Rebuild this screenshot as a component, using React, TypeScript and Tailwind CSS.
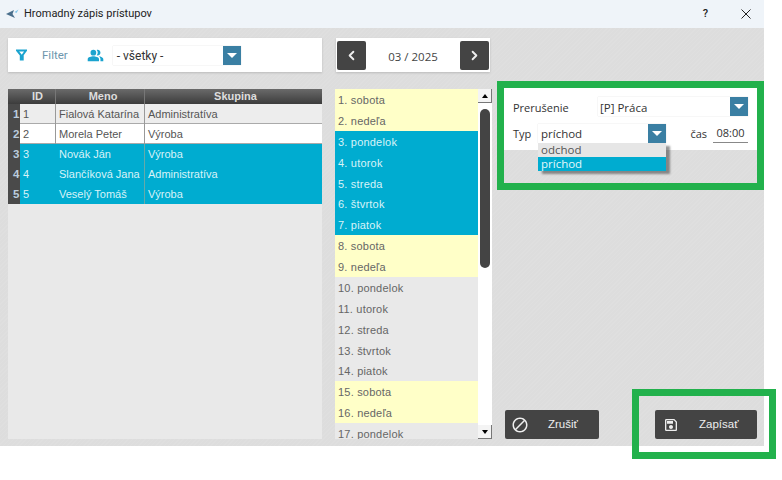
import { ChevronLeft, ChevronRight } from "lucide-react";
import { MdOutlineBlock, MdOutlineSave, MdPeopleAlt } from "react-icons/md";

const people = [
  { id: 1, name: "Fialová Katarína", group: "Administratíva", tone: "gray" },
  { id: 2, name: "Morela Peter", group: "Výroba", tone: "white" },
  { id: 3, name: "Novák Ján", group: "Výroba", tone: "blue" },
  { id: 4, name: "Slančíková Jana", group: "Administratíva", tone: "blue" },
  { id: 5, name: "Veselý Tomáš", group: "Výroba", tone: "blue" },
];

const days = [
  ["1. sobota", "y"],
  ["2. nedeľa", "y"],
  ["3. pondelok", "b"],
  ["4. utorok", "b"],
  ["5. streda", "b"],
  ["6. štvrtok", "b"],
  ["7. piatok", "b"],
  ["8. sobota", "y"],
  ["9. nedeľa", "y"],
  ["10. pondelok", "g"],
  ["11. utorok", "g"],
  ["12. streda", "g"],
  ["13. štvrtok", "g"],
  ["14. piatok", "g"],
  ["15. sobota", "y"],
  ["16. nedeľa", "y"],
  ["17. pondelok", "g"],
];

function Caret() {
  return (
    <span className="flex h-[19px] w-[18px] shrink-0 items-center justify-center bg-[#3a7fa3]">
      <span className="h-0 w-0 border-x-[5px] border-t-[5px] border-x-transparent border-t-white" />
    </span>
  );
}

function ScrollArrow({ up }: { up?: boolean }) {
  return (
    <div className="flex h-[14px] w-[14px] items-center justify-center border-r border-b border-[#777] bg-[#f4f4f4]">
      <span
        className={`h-0 w-0 border-x-[3px] border-x-transparent ${
          up ? "border-b-[4px] border-b-black" : "border-t-[4px] border-t-black"
        }`}
      />
    </div>
  );
}

export default function App() {
  return (
    <div className="relative h-[480px] w-[782px] overflow-hidden bg-white font-['Liberation_Sans',sans-serif] text-[11px] text-[#555]">
      {/* Title bar */}
      <div className="flex h-[28px] w-[764px] items-center bg-[#eff4f9] pl-[6px]">
        <svg width="13" height="10" viewBox="0 0 13 10" className="mr-[5px]">
          <path d="M0 5 L8 1 L6.5 5 L9 9 Z" fill="#4a6f8c" />
          <path d="M8.5 3 L12.5 0.5 L10.5 4 Z" fill="#7ec4e8" />
        </svg>
        <span className="font-['Roboto',sans-serif] text-[11px] text-[#222]">Hromadný zápis prístupov</span>
        <span className="ml-auto mr-[33px] font-['Roboto',sans-serif] text-[11px] font-medium text-[#222]">?</span>
        <svg width="10" height="10" viewBox="0 0 10 10" stroke="#222" strokeWidth="1" className="mr-[13px]">
          <path d="M0.5 0.5 L9.5 9.5 M9.5 0.5 L0.5 9.5" />
        </svg>
      </div>

      {/* Dialog body */}
      <div className="flex h-[418px] w-[764px] gap-[13px] bg-[#dedede] bg-[repeating-linear-gradient(135deg,#dfdfdf_0px,#dfdfdf_1px,#dddddd_1px,#dddddd_3px)] pl-[8px] pt-[10px]">
        {/* Left column */}
        <div className="flex w-[314px] flex-col">
          <div className="flex h-[34px] items-center bg-white font-['Roboto',sans-serif] shadow-[0_1px_2px_#bbb]">
            <svg width="11" height="12" viewBox="0 0 11 12" className="ml-[8px]" fill="none" stroke="#1aa3cf" strokeWidth="2">
              <path d="M1 1.5 H10 L6.7 6 V10.5 H4.8 V6 Z" />
            </svg>
            <span className="ml-[15px] pt-[2px] text-[11.5px] text-[#6d96ad]">Filter</span>
            <MdPeopleAlt size={17} className="ml-[19px] text-[#1aa3cf]" />
            <div className="ml-[9px] flex h-[19px] w-[128px] items-center justify-between pl-[4px] shadow-[0_0_1px_#ccc]">
              <span className="pt-[1px] text-[12px] text-[#333]">- všetky -</span>
              <Caret />
            </div>
          </div>

          <div className="mt-[17px] flex h-[350px] flex-col bg-[#e9e9e9]">
            <div className="flex h-[15px] bg-[linear-gradient(#6a6a6a,#3c3c3c)] text-center text-[11px] font-bold leading-[15px] text-[#ddd]">
              <div className="w-[12px]" />
              <div className="w-[36px] border-r border-[#777]">ID</div>
              <div className="w-[89px] border-r border-[#777] pl-[6px]">Meno</div>
              <div className="flex-1 pl-[4px]">Skupina</div>
            </div>
            {people.map((p) => (
              <div
                key={p.id}
                className={`flex h-[20px] items-center leading-[20px] ${
                  p.tone === "blue"
                    ? "bg-[#00acd0] text-[#d8f3f8]"
                    : p.tone === "white"
                      ? "border-b border-[#aaa] bg-white"
                      : "border-b border-[#aaa] bg-[#ededed]"
                }`}
              >
                <div className="h-[20px] w-[12px] bg-[#4a4a4a] pl-[5px] text-[11.5px] font-bold text-[#bcd]">{p.id}</div>
                <div className={`h-[20px] w-[36px] pl-[3px] ${p.tone === "blue" ? "" : "border-r border-[#999]"}`}>{p.id}</div>
                <div className={`h-[20px] w-[89px] pl-[3px] ${p.tone === "blue" ? "border-r border-[#6aa]" : "border-r border-[#999]"}`}>{p.name}</div>
                <div className="flex-1 pl-[3px]">{p.group}</div>
              </div>
            ))}
          </div>
        </div>

        {/* Middle column */}
        <div className="flex w-[157px] flex-col">
          <div className="ml-[1px] flex h-[34px] w-[154px] items-center justify-between bg-white px-[1px] font-['Open_Sans',sans-serif] shadow-[0_1px_2px_#bbb]">
            <span className="flex h-[29px] w-[29px] items-center justify-center rounded-[2px] bg-[#444]">
              <ChevronLeft size={15} strokeWidth={3} className="text-[#eee]" />
            </span>
            <span className="pt-[4px] text-[11.5px] text-[#444]">03 / 2025</span>
            <span className="flex h-[29px] w-[29px] items-center justify-center rounded-[2px] bg-[#444]">
              <ChevronRight size={15} strokeWidth={3} className="text-[#eee]" />
            </span>
          </div>

          <div className="mt-[17px] flex h-[350px] overflow-hidden">
            <div className="w-[143px]">
              {days.map(([label, tone]) => (
                <div
                  key={label}
                  className={`h-[20.875px] pl-[3px] pt-[1px] text-[11px] leading-[21px] tracking-[0.2px] ${
                    tone === "y"
                      ? "bg-[#ffffc8] text-[#666]"
                      : tone === "b"
                        ? "bg-[#00acd0] text-[#d8f3f8]"
                        : "bg-[#e9e9e9] text-[#666]"
                  }`}
                >
                  {label}
                </div>
              ))}
            </div>
            <div className="flex w-[14px] flex-col bg-white">
              <ScrollArrow up />
              <div className="ml-[2px] mt-[6px] h-[159px] w-[10px] rounded-[5px] bg-[#444]" />
              <div className="flex-1" />
              <ScrollArrow />
            </div>
          </div>
        </div>

        {/* Right column */}
        <div className="flex flex-1 flex-col pr-[7px] pt-[50px]">
          <div className="-ml-[1px] flex h-[62px] flex-col gap-[7px] bg-white px-[9px] pt-[9px] font-['Open_Sans',sans-serif] text-[11px] text-[#333]">
            <div className="flex items-center">
              <span className="w-[85px] pt-[3px]">Prerušenie</span>
              <div className="flex h-[19px] flex-1 items-center justify-between pl-[2px] shadow-[0_0_1px_#ccc]">
                <span className="pt-[2px] text-[11.5px]">[P] Práca</span>
                <Caret />
              </div>
            </div>
            <div className="flex items-center">
              <span className="w-[25px] pt-[2px]">Typ</span>
              <div className="flex h-[19px] w-[128px] items-center justify-between pl-[3px] shadow-[0_0_1px_#ccc]">
                <span className="pt-[1px] text-[11.5px]">príchod</span>
                <Caret />
              </div>
              <span className="ml-auto mr-[6px] pt-[2px]">čas</span>
              <div className="h-[19px] w-[35px] border-b border-[#888] text-center leading-[18px]">08:00</div>
            </div>
          </div>

          <div className="mb-[7px] mt-auto flex justify-between">
            <button className="flex h-[29px] w-[94px] items-center rounded-[2px] bg-[#444] pl-[6px] text-[11.5px] text-[#eee]">
              <MdOutlineBlock size={18} />
              <span className="ml-[19px] pt-[1px]">Zrušiť</span>
            </button>
            <button className="flex h-[29px] w-[102px] items-center rounded-[2px] bg-[#444] pl-[8px] text-[11.5px] text-[#eee]">
              <MdOutlineSave size={16} />
              <span className="ml-[20px] pt-[1px]">Zapísať</span>
            </button>
          </div>
        </div>
      </div>

      {/* Open dropdown */}
      <div className="absolute left-[538px] top-[143px] w-[128px] font-['Open_Sans',sans-serif] text-[11.5px] leading-[14px] shadow-[4px_3px_2px_rgba(60,60,60,0.55)]">
        <div className="h-[14px] bg-[#e6e6e6] pl-[3px] text-[#555]">odchod</div>
        <div className="h-[14px] bg-[#00acd0] pl-[3px] text-[#e4f8fb]">príchod</div>
      </div>

      {/* Green annotation frames */}
      <div className="absolute left-[497px] top-[81px] h-[109px] w-[267px] border-[7px] border-[#22b14c]" />
      <div className="absolute left-[632px] top-[389px] h-[70px] w-[144px] border-[7px] border-[#22b14c]" />
    </div>
  );
}
